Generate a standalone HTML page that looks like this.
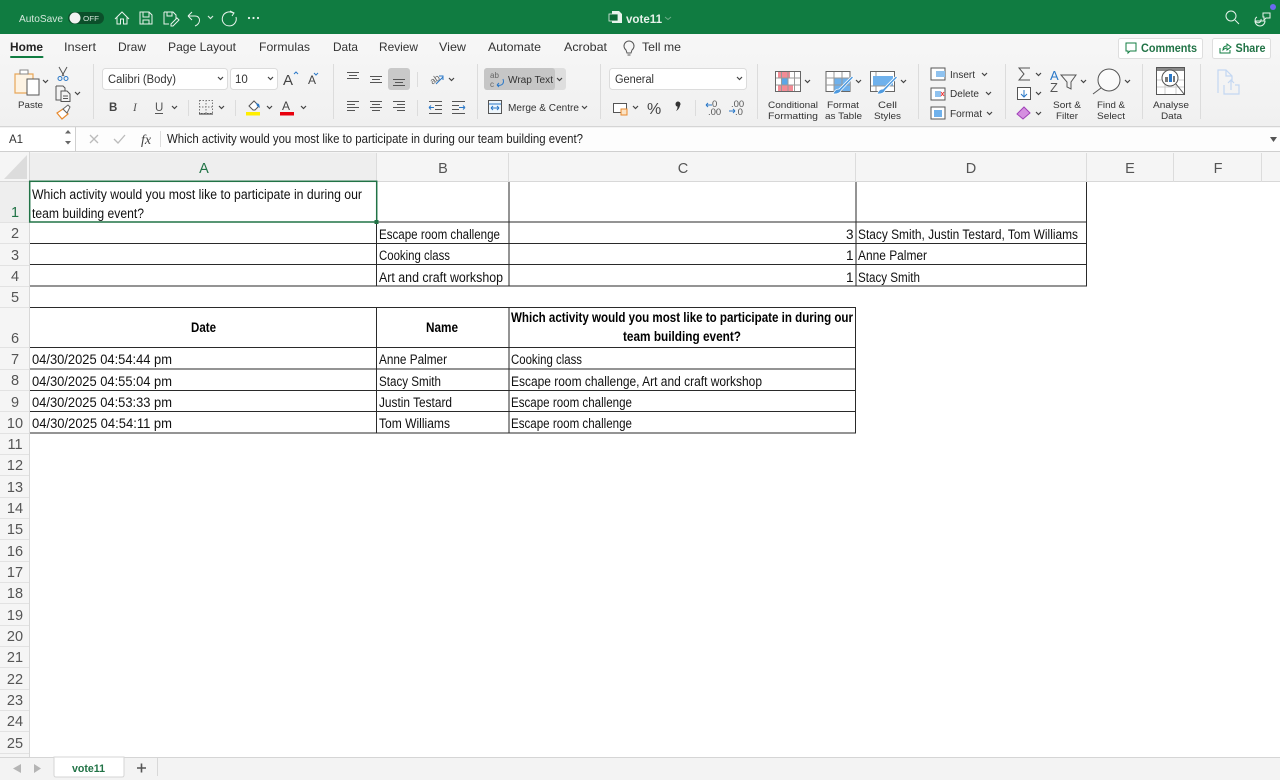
<!DOCTYPE html>
<html><head><meta charset="utf-8"><title>vote11</title>
<style>
html,body{margin:0;padding:0;background:#fff;width:1280px;height:780px;overflow:hidden}
svg{display:block;font-family:"Liberation Sans",sans-serif}
.c{font-size:13.5px;fill:#111}
.b{font-size:13.5px;fill:#000;font-weight:bold}
.t{font-size:12px;fill:#333}
.s{font-size:9.5px;fill:#333}
.r{font-size:14.5px;fill:#555;text-anchor:middle}
.i{fill:none;stroke:#555;stroke-width:1}
.w{fill:none;stroke:#e8f3ec;stroke-width:1}
.ch{fill:none;stroke:#444;stroke-width:1.2}
</style></head><body>
<svg width="1280" height="780" viewBox="0 0 1280 780" xmlns="http://www.w3.org/2000/svg">
<defs><linearGradient id="g" x1="0" y1="0" x2="0" y2="1"><stop offset="0" stop-color="#f7f7f7"/><stop offset="1" stop-color="#f0f0f0"/></linearGradient></defs>
<rect width="1280" height="780" fill="#fff"/>
<!-- title bar -->
<rect width="1280" height="34" fill="#107c41"/>
<text x="19" y="22" font-size="10.5" fill="#d5e8dc" textLength="44" lengthAdjust="spacingAndGlyphs">AutoSave</text>
<rect x="68" y="12" width="36" height="12" rx="6" fill="#0b4f2a"/><circle cx="75" cy="18" r="5.5" fill="#f2f2f2"/>
<text x="83" y="21" font-size="7.5" fill="#cfe2d6" textLength="16" lengthAdjust="spacingAndGlyphs">OFF</text>
<path class="w" d="M115 19l7-7 7 7M117 17v7h3.500v-5h3v5h3.500v-7"/>
<path class="w" d="M140 12h9l3 3v9h-12zM143 12v5h6v-5M143 24v-4h6v4"/>
<path class="w" d="M164 12h9l3 3v4M164 12v12h5M167 12v4h5v-4M171 24l6-6 2 2-6 6h-2z"/>
<path class="w" d="M188 16h7c6 0 6 8 0 10M188 16l4-4M188 16l4 4"/>
<path class="ch" style="stroke:#d5e8dc" d="M208 16l2.500 2.500 2.500-2.500"/>
<path class="w" d="M233 13a7 7 0 1 0 3 4M230 11l4 2-2 3"/>
<circle cx="249" cy="18" r="1.100" fill="#e8f3ec"/><circle cx="253.500" cy="18" r="1.100" fill="#e8f3ec"/><circle cx="258" cy="18" r="1.100" fill="#e8f3ec"/>
<path d="M612 11h7l3 3v9h-10z" fill="#e8f3ec"/><rect x="609" y="14" width="9" height="7" fill="#0d6a37" stroke="#e8f3ec" stroke-width=".8"/>
<text x="626" y="23" font-size="12" font-weight="bold" fill="#e6f2ea" textLength="36" lengthAdjust="spacingAndGlyphs">vote11</text>
<path d="M665 17l3 2.500 3-2.500" fill="none" stroke="#6fae8a"/>
<circle cx="1231" cy="16" r="5" class="w"/><path class="w" d="M1235 20l4 4"/>
<path class="w" d="M1255 21h10a5 5 0 0 1-10 0zM1257 17a3 3 0 1 0 4 2M1263 13h7v5h-4l-2 2v-3h-1z"/>
<circle cx="1273" cy="7" r="3" fill="#6a6af0"/>
<!-- ribbon -->
<rect y="34" width="1280" height="92" fill="url(#g)"/>
<rect y="126" width="1280" height="1" fill="#d5d5d5"/>
<g class="t">
<text x="10" y="51" font-weight="bold" fill="#222" textLength="33" lengthAdjust="spacingAndGlyphs">Home</text>
<text x="64" y="51" textLength="32" lengthAdjust="spacingAndGlyphs">Insert</text>
<text x="118" y="51" textLength="28" lengthAdjust="spacingAndGlyphs">Draw</text>
<text x="168" y="51" textLength="68" lengthAdjust="spacingAndGlyphs">Page Layout</text>
<text x="259" y="51" textLength="51" lengthAdjust="spacingAndGlyphs">Formulas</text>
<text x="333" y="51" textLength="25" lengthAdjust="spacingAndGlyphs">Data</text>
<text x="379" y="51" textLength="39" lengthAdjust="spacingAndGlyphs">Review</text>
<text x="439" y="51" textLength="27" lengthAdjust="spacingAndGlyphs">View</text>
<text x="488" y="51" textLength="53" lengthAdjust="spacingAndGlyphs">Automate</text>
<text x="564" y="51" textLength="43" lengthAdjust="spacingAndGlyphs">Acrobat</text>
<text x="642" y="51" textLength="39" lengthAdjust="spacingAndGlyphs">Tell me</text>
</g>
<rect x="10" y="56" width="33.500" height="2" rx="1" fill="#107c41"/>
<path class="i" d="M626 50a5 5 0 1 1 6 0l-1 3h-4zM627.500 55h3"/>
<rect x="1118.500" y="38.500" width="84" height="20" rx="2" fill="#fff" stroke="#dedede"/>
<path fill="none" stroke="#107c41" d="M1126 43h10v8h-6l-2 2v-2h-2z"/>
<text x="1141" y="52" font-size="11.500" font-weight="bold" fill="#217346" textLength="56" lengthAdjust="spacingAndGlyphs">Comments</text>
<rect x="1212.500" y="38.500" width="58" height="20" rx="2" fill="#fff" stroke="#dedede"/>
<path fill="none" stroke="#107c41" d="M1220 48v5h10v-3M1223 50c0-3 2-4 4-4v-2l4 3-4 3v-2c-2 0-3 1-4 2z"/>
<text x="1235.500" y="52" font-size="11.500" font-weight="bold" fill="#217346" textLength="30" lengthAdjust="spacingAndGlyphs">Share</text>
<!-- separators -->
<g fill="#dcdcdc"><rect x="93" y="64" width="1" height="55"/><rect x="333" y="64" width="1" height="55"/><rect x="477" y="64" width="1" height="55"/><rect x="600" y="64" width="1" height="55"/><rect x="757" y="64" width="1" height="55"/><rect x="918" y="64" width="1" height="55"/><rect x="1005" y="64" width="1" height="55"/><rect x="1142" y="64" width="1" height="55"/><rect x="1200" y="64" width="1" height="55"/></g>
<!-- clipboard -->
<path fill="#fdf3e3" stroke="#e8a75a" stroke-width="1.200" d="M15 74h5v-2h8v2h5v19H15z"/>
<rect x="20" y="70" width="8" height="4" fill="#fff" stroke="#888"/>
<rect x="27" y="79" width="12" height="16" fill="#fff" stroke="#555"/>
<path class="ch" d="M43 80l2.500 2.500 2.500-2.500"/>
<text x="18" y="108" class="s" textLength="25" lengthAdjust="spacingAndGlyphs">Paste</text>
<path fill="none" stroke="#555" d="M59 67l5 9M67 67l-5 9"/><circle cx="60" cy="78.500" r="2" fill="none" stroke="#2a78c8"/><circle cx="66" cy="78.500" r="2" fill="none" stroke="#2a78c8"/>
<path class="i" d="M56 86h7l2 2v3M56 86v14h5M61 91h6l3 3v7.500h-9zM63 96h5M63 98.500h5"/><path class="ch" d="M75 92l2.500 2.500 2.500-2.500"/>
<path fill="#fff" stroke="#e88a2e" stroke-width="1.200" d="M57 113l6-4 5 5-6 5z"/><path fill="#fff" stroke="#666" d="M63 109l5-4 2 2-3 6z"/>
<!-- font -->
<rect x="102.500" y="68.500" width="125" height="21" rx="3" fill="#fff" stroke="#dcdcdc"/>
<text x="108" y="83" font-size="11.500" fill="#333" textLength="68" lengthAdjust="spacingAndGlyphs">Calibri (Body)</text>
<path class="ch" d="M218 77l2.500 2.500 2.500-2.500"/>
<rect x="230.500" y="68.500" width="47" height="21" rx="3" fill="#fff" stroke="#dcdcdc"/>
<text x="235" y="83" font-size="11.500" fill="#333">10</text>
<path class="ch" d="M268 77l2.500 2.500 2.500-2.500"/>
<text x="283" y="85" font-size="15" fill="#444">A</text><path d="M294 74l2-2 2 2" fill="none" stroke="#2a78c8"/>
<text x="308" y="84" font-size="12" fill="#444">A</text><path d="M314 73l2 2 2-2" fill="none" stroke="#2a78c8"/>
<text x="109" y="111" font-size="11.500" font-weight="bold" fill="#444">B</text>
<text x="133" y="111" font-size="11.500" font-style="italic" fill="#555" font-family="Liberation Serif">I</text>
<text x="155" y="111" font-size="11.500" fill="#555">U</text><rect x="155" y="113" width="8" height="1" fill="#555"/>
<path class="ch" d="M172 106l2.500 2.500 2.500-2.500"/>
<rect x="188" y="100" width="1" height="16" fill="#dcdcdc"/>
<path fill="none" stroke="#777" stroke-dasharray="1.500 1.500" d="M199.500 100.500h13v13h-13zM206 100v13M199 107h13"/><rect x="199" y="113.500" width="14" height="1" fill="#333"/>
<path class="ch" d="M219 106l2.500 2.500 2.500-2.500"/>
<rect x="235" y="100" width="1" height="16" fill="#dcdcdc"/>
<path fill="#fff" stroke="#555" d="M249 106l5-5 5 5-4 4h-2z"/><path fill="#2a78c8" d="M256 103l3 1 1 4-3-2z"/><rect x="246" y="112" width="14" height="3.500" fill="#ffee00"/>
<path class="ch" d="M267 106l2.500 2.500 2.500-2.500"/>
<text x="282" y="110" font-size="12" fill="#444">A</text><rect x="280" y="112" width="14" height="3.500" fill="#e8000d"/>
<path class="ch" d="M301 106l2.500 2.500 2.500-2.500"/>
<!-- align -->
<rect x="388" y="68" width="22" height="22" rx="3" fill="#c9c9c9"/>
<path class="i" d="M347 72.500h12M349 75.500h8M347 78.500h12M370 76.500h12M372 79.500h8M370 82.500h12M393 79.500h12M395 82.500h8M393 85.500h12M347 101.500h12M347 104.500h8M347 107.500h12M347 110.500h8M370 101.500h12M372 104.500h8M370 107.500h12M372 110.500h8M393 101.500h12M397 104.500h8M393 107.500h12M397 110.500h8"/>
<rect x="417" y="72" width="1" height="15" fill="#dcdcdc"/><rect x="417" y="100" width="1" height="16" fill="#dcdcdc"/>
<text x="430" y="83" font-size="9" fill="#666" transform="rotate(-35 434 80)">ab</text><path fill="none" stroke="#2a78c8" d="M436 84l7-7M439 76h4v4"/>
<path class="ch" d="M449 78l2.500 2.500 2.500-2.500"/>
<path class="i" d="M429 101.500h13M429 113.500h13M435 105.500h7M435 109.500h7M452 101.500h13M452 113.500h13M452 105.500h7M452 109.500h7"/>
<path fill="none" stroke="#2a78c8" d="M429 107.500h5M429 107.500l2-2M429 107.500l2 2M459 107.500h5M465 107.500l-2-2M465 107.500l-2 2"/>
<!-- wrap -->
<rect x="484" y="68" width="82" height="22" rx="3" fill="#dedede"/><rect x="484" y="68" width="71" height="22" rx="3" fill="#c6c6c6"/>
<text x="490" y="78" font-size="8" fill="#666">ab</text><text x="490" y="87" font-size="8" fill="#666">c</text><path fill="none" stroke="#2a78c8" d="M503 79c2 6-3 7-6 6M497 85l2-2M497 85l2 2"/>
<text x="508" y="83" font-size="10" fill="#333" textLength="45" lengthAdjust="spacingAndGlyphs">Wrap Text</text>
<path class="ch" d="M557 78l2.500 2.500 2.500-2.500"/>
<rect x="488.500" y="100.500" width="13" height="13" fill="#eef6fc" stroke="#555"/><path fill="none" stroke="#2a78c8" d="M489 104h12M491 108h8M491 108l2-2M491 108l2 2M499 108l-2-2M499 108l-2 2"/>
<text x="508" y="111" font-size="10" fill="#333" textLength="71" lengthAdjust="spacingAndGlyphs">Merge &amp; Centre</text>
<path class="ch" d="M582 106l2.500 2.500 2.500-2.500"/>
<!-- number -->
<rect x="609.500" y="68.500" width="137" height="21" rx="3" fill="#fff" stroke="#dcdcdc"/>
<text x="615" y="83" font-size="11.500" fill="#333" textLength="39" lengthAdjust="spacingAndGlyphs">General</text>
<path class="ch" d="M737 77l2.500 2.500 2.500-2.500"/>
<rect x="613.500" y="103.500" width="13" height="9" fill="#fff" stroke="#555"/><rect x="621" y="109" width="6" height="6" fill="#fbe3c5" stroke="#e88a2e"/>
<path class="ch" d="M633 106l2.500 2.500 2.500-2.500"/>
<text x="647" y="114" font-size="16" fill="#444">%</text>
<path d="M675.500 104a2.500 2.500 0 1 1 4.500 1.500c-.5 2.500-2 4.500-4 5.500 1-1.500 1.500-2.500 1.500-4.500-1.200 0-2-1-2-2.500z" fill="#333"/>
<rect x="695" y="100" width="1" height="16" fill="#dcdcdc"/>
<text x="712" y="107" font-size="9.500" fill="#555">0</text><text x="708" y="115" font-size="9.500" fill="#555">.00</text><path fill="none" stroke="#2a78c8" d="M706 105h6M706 105l2-2M706 105l2 2"/>
<text x="731" y="107" font-size="9.500" fill="#555">.00</text><text x="735" y="115" font-size="9.500" fill="#555">.0</text><path fill="none" stroke="#2a78c8" d="M729 111h6M735 111l-2-2M735 111l-2 2"/>
<!-- styles -->
<g>
<rect x="775.500" y="71.500" width="25" height="20" fill="#fff" stroke="#666"/><rect x="778" y="72" width="12" height="6" fill="#f38b95"/><rect x="778" y="85" width="15" height="6" fill="#f38b95"/><rect x="781" y="78" width="7" height="7" fill="#5aa7e8"/>
<path fill="none" stroke="#999" d="M776 78h24M776 85h24M781.500 72v19M788 72v19M794.500 72v19"/>
<path class="ch" d="M805 80l2.500 2.500 2.500-2.500"/>
<text x="768" y="108" class="s" textLength="50" lengthAdjust="spacingAndGlyphs">Conditional</text>
<text x="768" y="119" class="s" textLength="50" lengthAdjust="spacingAndGlyphs">Formatting</text>
<rect x="826" y="71.500" width="24" height="20" fill="#fff" stroke="#666"/><rect x="834" y="78" width="16" height="13" fill="#6fb1ec"/><path fill="none" stroke="#999" d="M826 78h24M826 85h24M834 72v19M842 72v19"/>
<path d="M833 94c1-3 3-5 6-5l13-13 1.500 1.500-12.500 13c0 2-4 4-8 3.500z" fill="#4f9be0" stroke="#fff" stroke-width=".8"/>
<path class="ch" d="M856 80l2.500 2.500 2.500-2.500"/>
<text x="827" y="108" class="s" textLength="32" lengthAdjust="spacingAndGlyphs">Format</text>
<text x="825" y="119" class="s" textLength="37" lengthAdjust="spacingAndGlyphs">as Table</text>
<rect x="870.500" y="71.500" width="24" height="20" fill="#fff" stroke="#666"/><rect x="873" y="76" width="20" height="10" fill="#6fb1ec"/><path fill="none" stroke="#999" d="M871 86h23M876 72v4M876 86v5"/>
<path d="M877 94c1-3 3-5 6-5l13-13 1.500 1.500-12.500 13c0 2-4 4-8 3.500z" fill="#4f9be0" stroke="#fff" stroke-width=".8"/>
<path class="ch" d="M901 80l2.500 2.500 2.500-2.500"/>
<text x="878" y="108" class="s" textLength="19" lengthAdjust="spacingAndGlyphs">Cell</text>
<text x="874" y="119" class="s" textLength="27" lengthAdjust="spacingAndGlyphs">Styles</text>
</g>
<!-- cells -->
<rect x="931" y="68" width="14" height="12" fill="#fff" stroke="#555"/><rect x="936" y="71" width="9" height="6" fill="#8fc2ef"/>
<text x="950" y="78" font-size="10" fill="#333" textLength="25" lengthAdjust="spacingAndGlyphs">Insert</text><path class="ch" d="M982 73l2.500 2.500 2.500-2.500"/>
<rect x="931" y="88" width="14" height="12" fill="#fff" stroke="#555"/><rect x="935" y="91" width="6" height="6" fill="#8fc2ef"/><path d="M941 92l3 4M944 92l-3 4" stroke="#e33" fill="none"/>
<text x="950" y="97" font-size="10" fill="#333" textLength="29" lengthAdjust="spacingAndGlyphs">Delete</text><path class="ch" d="M986 92l2.500 2.500 2.500-2.500"/>
<rect x="931" y="107" width="14" height="12" fill="#fff" stroke="#555"/><rect x="934" y="110" width="8" height="7" fill="#6fb1ec"/>
<text x="950" y="117" font-size="10" fill="#333" textLength="32" lengthAdjust="spacingAndGlyphs">Format</text><path class="ch" d="M987 112l2.500 2.500 2.500-2.500"/>
<!-- edit -->
<path fill="none" stroke="#555" d="M1030 68h-11l5 6-5 6h11"/><path class="ch" d="M1036 73l2.500 2.500 2.500-2.500"/>
<rect x="1017.500" y="87.500" width="13" height="12" fill="#fff" stroke="#555"/><path fill="none" stroke="#2a78c8" d="M1024 90v7M1021 94l3 3 3-3"/><path class="ch" d="M1036 92l2.500 2.500 2.500-2.500"/>
<path fill="#d58fe0" stroke="#a040b8" d="M1017 114l7-7 6 6-7 6z"/><path class="ch" d="M1036 112l2.500 2.500 2.500-2.500"/>
<text x="1050" y="80" font-size="13" fill="#2a78c8">A</text><text x="1050" y="92" font-size="13" fill="#555">Z</text>
<path fill="none" stroke="#555" d="M1061 75h15l-5 7v7l-4-2v-5z"/><path class="ch" d="M1081 80l2.500 2.500 2.500-2.500"/>
<text x="1053" y="108" class="s" textLength="28" lengthAdjust="spacingAndGlyphs">Sort &amp;</text>
<text x="1056" y="119" class="s" textLength="22" lengthAdjust="spacingAndGlyphs">Filter</text>
<circle cx="1109" cy="80" r="11" fill="#fff" fill-opacity=".6" stroke="#555"/><path class="i" d="M1101 88l-8 6"/><path class="ch" d="M1125 80l2.500 2.500 2.500-2.500"/>
<text x="1097" y="108" class="s" textLength="28" lengthAdjust="spacingAndGlyphs">Find &amp;</text>
<text x="1097" y="119" class="s" textLength="28" lengthAdjust="spacingAndGlyphs">Select</text>
<!-- analyse -->
<rect x="1156.500" y="67.500" width="28" height="27" fill="#fff" stroke="#555"/><rect x="1157" y="68" width="27" height="3" fill="#888"/>
<path stroke="#ccc" fill="none" d="M1157 80h27M1157 87h27M1165 72v22M1176 72v22"/>
<circle cx="1170" cy="78" r="8" fill="#fff" stroke="#555"/><rect x="1165" y="77" width="3" height="5" fill="#777"/><rect x="1169" y="74" width="3" height="8" fill="#2a78c8"/><rect x="1173" y="76" width="2" height="6" fill="#777"/><path class="i" d="M1176 84l8 10"/>
<text x="1153" y="108" class="s" textLength="36" lengthAdjust="spacingAndGlyphs">Analyse</text>
<text x="1161" y="119" class="s" textLength="21" lengthAdjust="spacingAndGlyphs">Data</text>
<path fill="none" stroke="#c3d7f2" stroke-width="1.200" d="M1218 93v-23h8l6 6v5M1226 70v6h6M1224 85v9h15v-9h-4M1231 90v-10M1228 83l3-3 3 3"/>
<!-- formula bar -->
<rect y="127" width="1280" height="25" fill="#f3f3f3"/>
<rect y="151" width="1280" height="1" fill="#cfcfcf"/>
<rect x="0" y="128" width="75" height="23" fill="#fff"/><rect x="75" y="127" width="1" height="24" fill="#d0d0d0"/>
<rect x="76" y="128" width="1204" height="23" fill="#fdfdfd"/>
<text x="9" y="143" font-size="11.500" fill="#333">A1</text>
<path d="M65 133.500l3-3.500 3 3.500zM65 141l3 3.500 3-3.500z" fill="#666"/>
<path fill="none" stroke="#bbb" stroke-width="1.300" d="M90 135l8 8M98 135l-8 8M114 139l4 4 7-8"/>
<text x="141" y="144" font-family="Liberation Serif" font-style="italic" font-size="14" fill="#444">fx</text>
<rect x="160" y="131" width="1" height="16" fill="#ddd"/>
<text x="167" y="143" font-size="12.500" fill="#222" textLength="416" lengthAdjust="spacingAndGlyphs">Which activity would you most like to participate in during our team building event?</text>
<path d="M1270 137h7l-3.500 5z" fill="#555"/>
<!-- column headers -->
<rect y="152" width="1280" height="30" fill="#f5f5f5"/>
<rect x="30" y="153" width="347" height="28" fill="#eeeeee"/>
<rect y="181" width="1280" height="1" fill="#d8d8d8"/>
<path d="M27 155v24H4z" fill="#dcdcdc"/>
<rect x="29" y="152" width="1" height="30" fill="#d8d8d8"/>
<g fill="#dcdcdc"><rect x="376" y="153" width="1" height="29"/><rect x="508" y="153" width="1" height="29"/><rect x="855" y="153" width="1" height="29"/><rect x="1086" y="153" width="1" height="29"/><rect x="1173" y="153" width="1" height="29"/><rect x="1261" y="153" width="1" height="29"/></g>
<g font-size="14.500" text-anchor="middle" fill="#555"><text x="204" y="173" fill="#217346">A</text><text x="443" y="173">B</text><text x="683" y="173">C</text><text x="971" y="173">D</text><text x="1130" y="173">E</text><text x="1218" y="173">F</text></g>
<!-- row headers -->
<rect y="182" width="30" height="575" fill="#f5f5f5"/>
<rect x="29" y="182" width="1" height="575" fill="#d8d8d8"/>
<rect y="182" width="29" height="40" fill="#eeeeee"/>
<g fill="#e2e2e2"><rect y="222" width="29" height="1"/><rect y="243" width="29" height="1"/><rect y="265" width="29" height="1"/><rect y="286" width="29" height="1"/><rect y="307" width="29" height="1"/><rect y="347" width="29" height="1"/><rect y="369" width="29" height="1"/><rect y="390" width="29" height="1"/><rect y="411" width="29" height="1"/><rect y="433" width="29" height="1"/><rect y="454" width="29" height="1"/><rect y="475" width="29" height="1"/><rect y="497" width="29" height="1"/><rect y="518" width="29" height="1"/><rect y="539" width="29" height="1"/><rect y="561" width="29" height="1"/><rect y="582" width="29" height="1"/><rect y="603" width="29" height="1"/><rect y="625" width="29" height="1"/><rect y="646" width="29" height="1"/><rect y="667" width="29" height="1"/><rect y="689" width="29" height="1"/><rect y="710" width="29" height="1"/><rect y="731" width="29" height="1"/><rect y="753" width="29" height="1"/></g>
<g class="r">
<text x="15" y="217" fill="#217346">1</text><text x="15" y="238">2</text><text x="15" y="260">3</text><text x="15" y="281">4</text><text x="15" y="302">5</text><text x="15" y="343">6</text><text x="15" y="364">7</text><text x="15" y="385">8</text><text x="15" y="407">9</text><text x="15" y="428">10</text><text x="15" y="449">11</text><text x="15" y="470">12</text><text x="15" y="492">13</text><text x="15" y="513">14</text><text x="15" y="534">15</text><text x="15" y="556">16</text><text x="15" y="577">17</text><text x="15" y="598">18</text><text x="15" y="620">19</text><text x="15" y="641">20</text><text x="15" y="662">21</text><text x="15" y="684">22</text><text x="15" y="705">23</text><text x="15" y="726">24</text><text x="15" y="748">25</text>
</g>
<!-- grid lines -->
<g fill="#2a2a2a">
<rect x="30" y="221.500" width="1057" height="1"/><rect x="30" y="243" width="1057" height="1"/><rect x="30" y="264" width="1057" height="1"/><rect x="30" y="285.500" width="1057" height="1"/>
<rect x="376" y="222" width="1" height="64"/><rect x="508.500" y="182" width="1" height="104"/><rect x="855.500" y="182" width="1" height="104"/><rect x="1086" y="182" width="1" height="104"/>
<rect x="30" y="307" width="826" height="1"/><rect x="30" y="347" width="826" height="1"/><rect x="30" y="368.500" width="826" height="1"/><rect x="30" y="390" width="826" height="1"/><rect x="30" y="411" width="826" height="1"/><rect x="30" y="432.500" width="826" height="1"/>
<rect x="376" y="307" width="1" height="126"/><rect x="508.500" y="307" width="1" height="126"/><rect x="855" y="307" width="1" height="126"/>
</g>
<!-- selection -->
<rect x="29.700" y="181.300" width="347" height="40.700" fill="none" stroke="#217346" stroke-width="1.500"/>
<rect x="374.500" y="220" width="4" height="4" fill="#217346"/>
<!-- cell text -->
<g class="c">
<text x="32" y="199" textLength="330" lengthAdjust="spacingAndGlyphs">Which activity would you most like to participate in during our</text>
<text x="32" y="218" textLength="112" lengthAdjust="spacingAndGlyphs">team building event?</text>
<text x="379" y="239" textLength="121" lengthAdjust="spacingAndGlyphs">Escape room challenge</text>
<text x="379" y="260" textLength="71" lengthAdjust="spacingAndGlyphs">Cooking class</text>
<text x="379" y="282" textLength="124" lengthAdjust="spacingAndGlyphs">Art and craft workshop</text>
<text x="846" y="239">3</text><text x="846" y="260">1</text><text x="846" y="282">1</text>
<text x="858" y="239" textLength="220" lengthAdjust="spacingAndGlyphs">Stacy Smith, Justin Testard, Tom Williams</text>
<text x="858" y="260" textLength="69" lengthAdjust="spacingAndGlyphs">Anne Palmer</text>
<text x="858" y="282" textLength="62" lengthAdjust="spacingAndGlyphs">Stacy Smith</text>
<text x="32" y="364" textLength="140" lengthAdjust="spacingAndGlyphs">04/30/2025 04:54:44 pm</text>
<text x="32" y="386" textLength="140" lengthAdjust="spacingAndGlyphs">04/30/2025 04:55:04 pm</text>
<text x="32" y="407" textLength="140" lengthAdjust="spacingAndGlyphs">04/30/2025 04:53:33 pm</text>
<text x="32" y="428" textLength="140" lengthAdjust="spacingAndGlyphs">04/30/2025 04:54:11 pm</text>
<text x="379" y="364" textLength="68" lengthAdjust="spacingAndGlyphs">Anne Palmer</text>
<text x="379" y="386" textLength="62" lengthAdjust="spacingAndGlyphs">Stacy Smith</text>
<text x="379" y="407" textLength="73" lengthAdjust="spacingAndGlyphs">Justin Testard</text>
<text x="379" y="428" textLength="71" lengthAdjust="spacingAndGlyphs">Tom Williams</text>
<text x="511" y="364" textLength="71" lengthAdjust="spacingAndGlyphs">Cooking class</text>
<text x="511" y="386" textLength="251" lengthAdjust="spacingAndGlyphs">Escape room challenge, Art and craft workshop</text>
<text x="511" y="407" textLength="121" lengthAdjust="spacingAndGlyphs">Escape room challenge</text>
<text x="511" y="428" textLength="121" lengthAdjust="spacingAndGlyphs">Escape room challenge</text>
</g>
<g class="b">
<text x="191" y="332" textLength="25" lengthAdjust="spacingAndGlyphs">Date</text>
<text x="426" y="332" textLength="32" lengthAdjust="spacingAndGlyphs">Name</text>
<text x="511" y="322" textLength="342" lengthAdjust="spacingAndGlyphs">Which activity would you most like to participate in during our</text>
<text x="623" y="341" textLength="118" lengthAdjust="spacingAndGlyphs">team building event?</text>
</g>
<!-- tab bar -->
<rect y="757" width="1280" height="23" fill="#f3f3f3"/>
<rect y="757" width="1280" height="1" fill="#d5d5d5"/>
<path d="M21 764v9l-8-4.500zM34 764v9l7-4.500z" fill="#b5b5b5"/>
<path d="M54 757h70v18q0 2-2 2H56q-2 0-2-2z" fill="#fff" stroke="#d5d5d5"/>
<text x="72" y="772" font-size="11" font-weight="bold" fill="#217346" textLength="33" lengthAdjust="spacingAndGlyphs">vote11</text>
<path d="M137 768h9M141.500 763.500v9" stroke="#555" stroke-width="1.600" fill="none"/>
<rect x="157" y="758" width="1" height="18" fill="#d8d8d8"/>
</svg>
</body></html>
